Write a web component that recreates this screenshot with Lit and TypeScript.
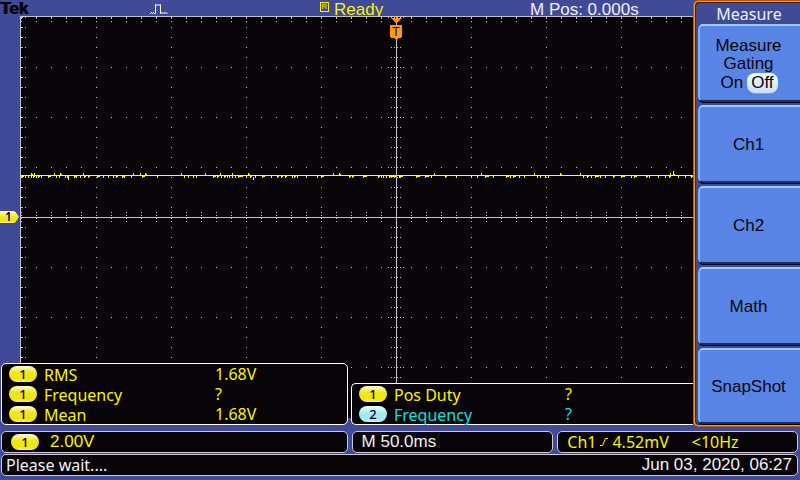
import { LitElement, html, css, svg } from "lit";
import { customElement, property } from "lit/decorators.js";

interface Measurement {
  channel: number;
  name: string;
  value: string;
}

const LEFT_READOUTS: Measurement[] = [
  { channel: 1, name: "RMS", value: "1.68V" },
  { channel: 1, name: "Frequency", value: "?" },
  { channel: 1, name: "Mean", value: "1.68V" },
];

const RIGHT_READOUTS: Measurement[] = [
  { channel: 1, name: "Pos Duty", value: "?" },
  { channel: 2, name: "Frequency", value: "?" },
];

const px = (x: number, y: number, w = 1, h = 1) => `M${x} ${y}h${w}v${h}h${-w}z`;

/* Graticule: 10 by 8 divisions, 75 by 50 units each, five minor steps per division. */
function graticulePath(): string {
  const cx = 375;
  const cy = 200;
  const out: string[] = [];
  for (let y = 0; y <= 400; y += 10) {
    out.push(px(0, y, 2), px(4, y));
    for (let x = 75; x <= 750; x += 75) out.push(px(x, y));
    for (const d of [-5, -2, 1, 4]) out.push(px(cx + d, y));
    if (y % 50 === 0) {
      for (let x = 15; x <= 750; x += 15) out.push(px(x, y));
      out.push(px(cx - 8, y), px(cx + 7, y));
    }
  }
  for (let x = 0; x <= 750; x += 15) {
    out.push(px(x, 0, 1, 2), px(x, 4));
    for (const d of [-5, -2, 1, 4]) out.push(px(x, cy + d));
  }
  return out.join("");
}

/* Noise on the trace: [start, width] in samples. */
const DIPS: [number, number][] = [
  [0, 3], [4, 1], [7, 1], [10, 1], [12, 2], [15, 1], [17, 2], [20, 1], [27, 3], [35, 1], [38, 1], [44, 1],
  [46, 2], [53, 2], [55, 1], [59, 1], [63, 2], [67, 2], [76, 3], [82, 1], [87, 1], [92, 1], [95, 2], [101, 2],
  [103, 1], [110, 1], [121, 3], [136, 1], [163, 1], [167, 1], [172, 1], [175, 1], [192, 3], [196, 2], [200, 1],
  [203, 2], [206, 1], [208, 1], [211, 1], [214, 1], [217, 5], [225, 1], [229, 2], [234, 1], [241, 3], [250, 1],
  [256, 2], [260, 2], [264, 2], [271, 1], [273, 2], [276, 1], [285, 1], [296, 1], [300, 3], [328, 2], [331, 2],
  [342, 4], [357, 2], [360, 1], [362, 1], [365, 1], [368, 7], [378, 4], [395, 4], [404, 4], [410, 1], [424, 2],
  [435, 1], [450, 1], [456, 1], [464, 4], [472, 1], [485, 3], [489, 1], [492, 3], [498, 1], [503, 1], [516, 1],
  [519, 1], [524, 1], [527, 1], [562, 1], [566, 2], [570, 1], [574, 4], [579, 1], [584, 1], [592, 2], [600, 4],
  [610, 1], [613, 3], [625, 2], [628, 1], [637, 1], [644, 1], [648, 2], [657, 1], [664, 1], [670, 2],
];
const PEAKS: [number, number][] = [
  [10, 2], [13, 1], [33, 1], [39, 2], [62, 1], [112, 1], [119, 1], [124, 2], [160, 1], [184, 1], [199, 1],
  [211, 1], [227, 2], [312, 1], [318, 2], [413, 1], [460, 1], [513, 1], [539, 2], [559, 1], [649, 1], [652, 2],
];

function tracePath(): string {
  return [
    px(0, 158, 750),
    ...DIPS.map(([x, w]) => px(x, 159, w) + px(x, 160)),
    ...PEAKS.map(([x, w]) => px(x, 156, 1, 2) + px(x, 157, w)),
    px(47, 160, 1, 3),
    px(232, 160, 1, 3),
    px(652, 154, 1, 3),
  ].join("");
}

@customElement("scope-readout")
class ScopeReadout extends LitElement {
  @property({ attribute: false }) rows: Measurement[] = [];

  static styles = css`
    :host {
      display: block;
      box-sizing: border-box;
      background: #080408;
      border: 1px solid #fff;
      border-radius: 5px;
      padding: 0 7px;
      font: 16px/20px "Noto Sans", "Open Sans", sans-serif;
    }
    table {
      width: 100%;
      table-layout: fixed;
      border-collapse: collapse;
    }
    th, td {
      padding: 0;
      height: 20px;
      line-height: 20px;
      font-weight: 400;
      text-align: left;
      white-space: nowrap;
      vertical-align: top;
    }
    .tag { width: 35px; }
    .name { width: 171px; }
    .label {
      display: block;
      height: 20px;
      line-height: 22px;
    }
    .ch1 { color: #f8f400; }
    .ch2 { color: #10e0e0; }
    .pill {
      display: block;
      width: 28px;
      height: 16px;
      margin-top: 2px;
      border-radius: 8px;
      color: #080408;
      background: linear-gradient(#fffce0, #f0e820 40%, #f0e410 80%, #f4f070);
      font: 500 13px/16px "Noto Sans", sans-serif;
      text-align: center;
    }
    .ch2 .pill { background: linear-gradient(#e8ffff, #a0e8f4 50%, #a0e8f4 80%, #c8f8ff); }
  `;

  render() {
    return html`<table>
      <tbody>
        ${this.rows.map(
          (r) => html`<tr class="ch${r.channel}">
            <td class="tag"><span class="pill">${r.channel}</span></td>
            <th class="name" scope="row"><span class="label">${r.name}</span></th>
            <td>${r.value}</td>
          </tr>`
        )}
      </tbody>
    </table>`;
  }
}

@customElement("app-root")
class AppRoot extends LitElement {
  static styles = css`
    :host {
      display: flex;
      flex-direction: column;
      box-sizing: border-box;
      min-height: 100vh;
      background: #404a96;
      color: #f0f0f8;
      font: 17px/20px "Liberation Sans", Arial, sans-serif;
    }
    .main {
      display: grid;
      grid-template-columns: minmax(0, 1fr) 107px;
    }
    .scope {
      position: relative;
      display: flex;
      flex-direction: column;
      padding-bottom: 9px;
    }
    .topbar {
      display: grid;
      grid-template-columns: 150fr 169fr 211fr 163fr;
      height: 16px;
      line-height: 20px;
      white-space: nowrap;
    }
    .topbar > * {
      display: flex;
      align-items: flex-start;
    }
    .brand {
      color: #080408;
      font-weight: 700;
      line-height: 18px;
      text-shadow: 1px 0 #080408;
    }
    .state {
      padding-left: 1px;
      gap: 5px;
      color: #f8f400;
    }
    .run {
      box-sizing: border-box;
      width: 9px;
      height: 10px;
      margin-top: 2px;
      border: 1px solid #f8f400;
      font: 8px/8px "Liberation Sans", sans-serif;
      text-align: center;
    }
    .stage {
      flex: 1;
      display: grid;
      grid-template-columns: 20px minmax(0, 1fr);
    }
    .tag {
      display: block;
      margin-top: 195px;
      overflow: visible;
    }
    .plot {
      display: block;
      width: 100%;
      height: 100%;
      background: #080408;
      shape-rendering: crispEdges;
    }
    .smooth { shape-rendering: auto; }
    .glyph { font: 400 12px "Liberation Sans", sans-serif; }
    .readouts {
      position: absolute;
      left: 1px;
      right: 0;
      bottom: 2px;
      display: grid;
      grid-template-columns: 347fr 342fr;
      column-gap: 3px;
      align-items: end;
    }
    .cut {
      border-right: 0;
      border-radius: 5px 0 0 5px;
    }
    .menu {
      box-sizing: border-box;
      display: flex;
      flex-direction: column;
      gap: 3px;
      padding: 2px 0 2px 4px;
      border: solid #c05800;
      border-width: 1px 0 1px 1px;
      border-radius: 5px 0 0 5px;
      box-shadow: inset 1px 1px #ff9810, inset 1px -1px #ff9810, inset 2px 2px #40200c, inset 2px -2px #202850;
    }
    .title {
      margin: 0;
      height: 18px;
      font: 16px/22px "Noto Sans", "Open Sans", sans-serif;
      text-align: center;
    }
    .key {
      box-sizing: border-box;
      height: 78px;
      padding: 2px 3px 0 0;
      border: solid;
      border-width: 2px 0 2px 2px;
      border-color: #98ccff transparent #183068 #78b4f8;
      border-radius: 5px 0 0 5px;
      background: #5884e6;
      box-shadow: 0 1px #080408;
      color: #080408;
      font: inherit;
      line-height: 18px;
    }
    .key:first-of-type { padding-top: 3px; }
    .key:last-child { height: 76px; }
    .choice {
      display: flex;
      justify-content: center;
      gap: 4px;
      padding-left: 1px;
      line-height: 20px;
    }
    .on {
      padding: 0 4px;
      border-radius: 8px;
      background: linear-gradient(#f4fcff, #c8e0f4);
      box-shadow: 0 1px #90a0b8;
    }
    .bottom {
      display: grid;
      grid-template-columns: 347fr 202fr 241fr;
      gap: 1px 4px;
      padding: 4px 2px 4px 1px;
      line-height: 20px;
    }
    .box {
      box-sizing: border-box;
      display: flex;
      align-items: center;
      min-width: 0;
      height: 22px;
      padding: 0 9px;
      border: 1px solid #d0c8d8;
      border-radius: 5px;
      background: #080408;
      white-space: nowrap;
    }
    .noto { font: 16px/20px "Noto Sans", "Open Sans", sans-serif; }
    .yellow { color: #f8f400; }
    .scale { gap: 11px; }
    .pill {
      width: 28px;
      height: 16px;
      border-radius: 8px;
      color: #080408;
      background: linear-gradient(#fffce0, #f0e820 40%, #f0e410 80%, #f4f070);
      font: 500 13px/16px "Noto Sans", sans-serif;
      text-align: center;
    }
    .trigger { gap: 4px; }
    .rate { margin-left: 19px; }
    .status {
      grid-column: 1 / -1;
      justify-content: space-between;
      padding: 0 5px 0 4px;
    }
  `;

  render() {
    return html`
      <main class="main">
        <section class="scope">
          <header class="topbar">
            <span class="brand">Tek</span>
            <span>
              <svg width="18" height="16" viewBox="0 0 18 16" fill="none" stroke="#fff" aria-label="Pulse">
                <path d="M0 13.500h1m0-1h1m0 1h1m0-1h1m0 1h1.500V4.500h1m0 1h1m0-1h1m0 1h1m0-1h1V13.500h1m0-1h1m0 1h1m0-1h1m0 1h1m0-1h1m0 1h1" />
              </svg>
            </span>
            <span class="state"><span class="run">R</span>Ready</span>
            <span>M Pos: 0.000s</span>
          </header>
          <div class="stage">
            <svg class="tag" width="20" height="12" viewBox="0 0 20 12" aria-label="Channel 1 ground">
              <defs>
                <linearGradient id="gold" x2="0" y2="1">
                  <stop offset="0" stop-color="#fffcd0" />
                  <stop offset="0.5" stop-color="#f0e818" />
                  <stop offset="0.85" stop-color="#f0e410" />
                  <stop offset="1" stop-color="#f8f490" />
                </linearGradient>
              </defs>
              <path d="M0 0h13q2 0 3 1.500l3 4.500-3 4.500q-1 1.500-3 1.500H0z" fill="url(#gold)" />
              <text x="5" y="10" font-family="Noto Sans, sans-serif" font-weight="600" font-size="12">1</text>
            </svg>
            <svg class="plot">
              <rect width="100%" height="1" fill="#c8c0c8" />
              <rect width="1" height="100%" fill="#c8c0c8" />
              <g transform="translate(1 1)">
                ${svg`<path fill="#c8c0c8" d=${graticulePath()} /><path fill="#ffff00" d=${tracePath()} />`}
                <rect y="200" width="750" height="1" fill="#c8c0c8" />
                <rect x="375" width="1" height="400" fill="#c8c0c8" />
                <g class="smooth">
                  <path d="M370 1h11l-5.500 5.500z" fill="#ff9810" />
                  <path d="M369 8h12v12l-2 1h-1l-2.500 2-2.500-2h-1l-3-1z" fill="#ff9810" />
                  <text class="glyph" x="375" y="19" text-anchor="middle" fill="#080408">T</text>
                </g>
              </g>
            </svg>
          </div>
          <div class="readouts">
            <scope-readout .rows=${LEFT_READOUTS}></scope-readout>
            <scope-readout class="cut" .rows=${RIGHT_READOUTS}></scope-readout>
          </div>
        </section>
        <nav class="menu" aria-label="Measure">
          <h1 class="title">Measure</h1>
          <button class="key">
            Measure<br />Gating
            <span class="choice"><span>On</span><span class="on">Off</span></span>
          </button>
          <button class="key">Ch1</button>
          <button class="key">Ch2</button>
          <button class="key">Math</button>
          <button class="key">SnapShot</button>
        </nav>
      </main>
      <footer class="bottom">
        <div class="box scale yellow"><span class="pill">1</span>2.00V</div>
        <div class="box">M 50.0ms</div>
        <div class="box trigger yellow noto">
          <span>Ch1</span>
          <svg width="8" height="10" viewBox="0 0 8 10" fill="none" stroke="#f8f400" aria-label="Rising edge">
            <path d="M0 8.500h2.500l3-7H8" />
          </svg>
          <span>4.52mV</span>
          <span class="rate">&lt;10Hz</span>
        </div>
        <div class="box status"><span class="noto">Please wait....</span><time>Jun 03, 2020, 06:27</time></div>
      </footer>
    `;
  }
}
